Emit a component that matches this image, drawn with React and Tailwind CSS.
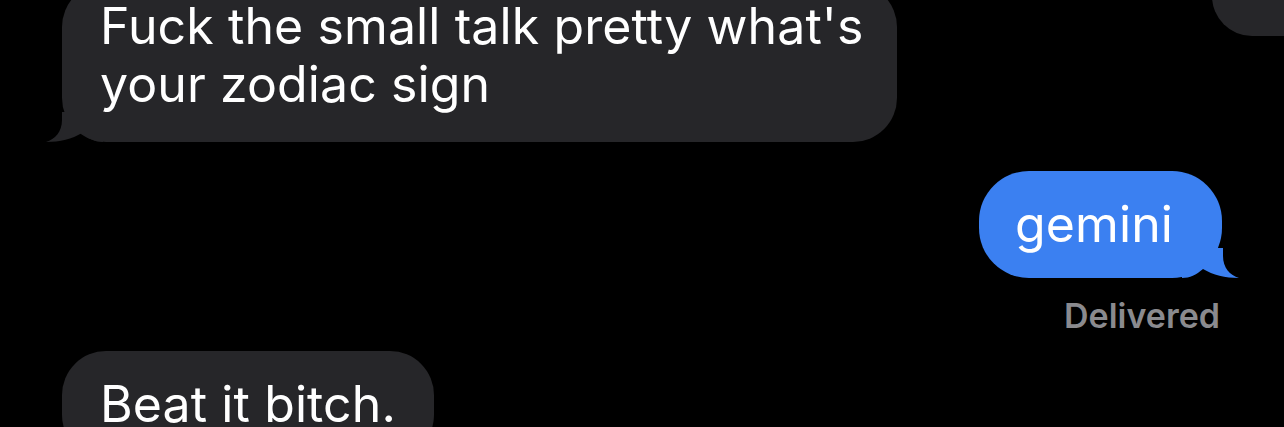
import React from 'react';

const GRAY = '#262629';
const BLUE = '#3b80f1';

// iMessage-style tail for incoming bubbles (bottom-left)
const TailLeft = ({ color }) => (
    <svg className="absolute left-[-17px] bottom-0" width="58" height="30" viewBox="0 0 58 30">
        <path d="M17 0 L17 8 C17 20 10 27 1 30 C15 30 27 27 37 21 C44 27 50 30 58 30 L58 0 Z" fill={color} />
    </svg>
);

// mirrored tail for outgoing bubbles (bottom-right)
const TailRight = ({ color }) => (
    <svg className="absolute right-[-18px] bottom-0" width="58" height="30" viewBox="0 0 58 30">
        <path d="M41 0 L41 8 C41 20 48 27 57 30 C43 30 31 27 21 21 C14 27 8 30 0 30 L0 0 Z" fill={color} />
    </svg>
);

const Incoming = ({ children, className = '', tail = true }) => (
    <div className={`relative rounded-[44px] bg-[#262629] text-white ${className}`}>
        <p className="text-[50px] leading-[58px] tracking-[0.1px]">{children}</p>
        {tail && <TailLeft color={GRAY} />}
    </div>
);

export default function App() {
    return (
        <div
            className="relative w-[1284px] h-[427px] overflow-hidden bg-black"
            style={{ fontFamily: 'Inter, "Noto Sans", sans-serif' }}
        >
            {/* corner of the previous bubble, cut off at the top right */}
            <div className="absolute left-[1212px] top-[-64px] w-[200px] h-[100px] rounded-[40px] bg-[#262629]" />

            <div className="flex flex-col">
                <div className="ml-[62px] mt-[-17px]">
                    <Incoming className="inline-block pl-[38px] pr-[34px] pt-[14px] pb-[29px]">
                        Fuck the small talk pretty what's
                        <br />
                        your zodiac sign
                    </Incoming>
                </div>

                <div className="mt-[29px] mr-[62px] flex justify-end">
                    <div className="relative rounded-[50px] bg-[#3b80f1] pl-[36px] pr-[49px] pt-[24px] pb-[25px] text-white">
                        <p className="text-[50px] leading-[58px] tracking-[0.1px]">gemini</p>
                        <TailRight color={BLUE} />
                    </div>
                </div>

                <div className="mt-[18px] mr-[64px] text-right text-[34px] font-semibold leading-[40px] text-[#8a8a8e]">
                    Delivered
                </div>

                <div className="ml-[62px] mt-[15px]">
                    <Incoming className="inline-block pl-[38px] pr-[38px] pt-[24px] pb-[26px]" tail={false}>
                        Beat it bitch.
                    </Incoming>
                </div>
            </div>
        </div>
    );
}
